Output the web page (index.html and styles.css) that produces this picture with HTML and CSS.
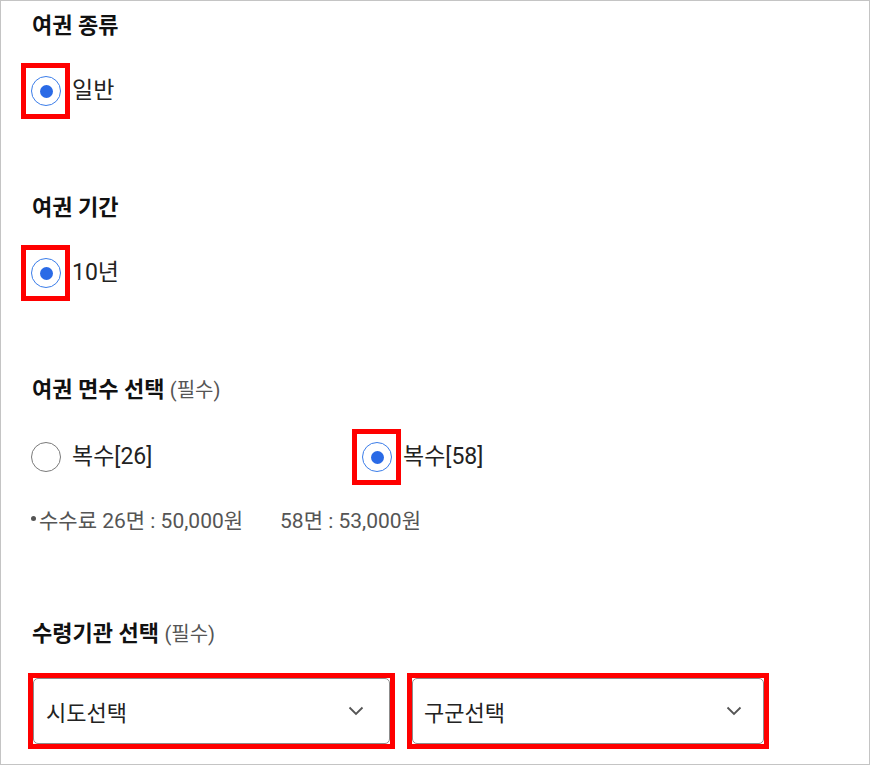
FILE: index.html
```html
<!DOCTYPE html>
<html lang="ko">
<head>
<meta charset="utf-8">
<title>여권 신청</title>
<link rel="stylesheet" href="styles.css">
</head>
<body>
<div class="frame">
  <section class="sec sec-first">
    <h2 class="title">여권 종류</h2>
    <div class="options">
      <label class="opt">
        <span class="mark marked"><span class="radio checked"></span></span>
        <span class="label">일반</span>
      </label>
    </div>
  </section>

  <section class="sec">
    <h2 class="title">여권 기간</h2>
    <div class="options">
      <label class="opt">
        <span class="mark marked"><span class="radio checked"></span></span>
        <span class="label">10년</span>
      </label>
    </div>
  </section>

  <section class="sec">
    <h2 class="title">여권 면수 선택 <span class="req">(필수)</span></h2>
    <div class="options options-two">
      <label class="opt">
        <span class="mark"><span class="radio"></span></span>
        <span class="label">복수[26]</span>
      </label>
      <label class="opt">
        <span class="mark marked"><span class="radio checked"></span></span>
        <span class="label">복수[58]</span>
      </label>
    </div>
    <p class="note"><span class="bullet"></span>수수료 26면 : 50,000원<span class="note-gap"></span>58면 : 53,000원</p>
  </section>

  <section class="sec sec-last">
    <h2 class="title">수령기관 선택 <span class="req">(필수)</span></h2>
    <div class="selects">
      <div class="select-mark">
        <div class="select">
          <span class="select-text">시도선택</span>
          <svg class="chev" width="16" height="10" viewBox="0 0 16 10"><path d="M1.5 1.5 L8 8 L14.5 1.5" fill="none" stroke="#555" stroke-width="1.8"/></svg>
        </div>
      </div>
      <div class="select-mark">
        <div class="select select-b">
          <span class="select-text">구군선택</span>
          <svg class="chev" width="16" height="10" viewBox="0 0 16 10"><path d="M1.5 1.5 L8 8 L14.5 1.5" fill="none" stroke="#555" stroke-width="1.8"/></svg>
        </div>
      </div>
    </div>
  </section>
</div>
</body>
</html>
```

FILE: styles.css
```css
* { box-sizing: border-box; }
html, body { margin: 0; padding: 0; background: #fff; }
body {
  font-family: Roboto, "Noto Sans CJK KR", sans-serif;
  color: #222;
}
.frame {
  width: 870px;
  height: 765px;
  border: 1px solid #c4c4c4;
  overflow: hidden;
  padding: 10px 0 0 20px;
}
.sec { margin-top: 74px; }
.sec-first { margin-top: 0; }
.sec-last { margin-top: 83px; }
.title {
  margin: 0 0 0 11px;
  font-size: 22px;
  font-weight: 700;
  line-height: 30px;
  color: #111;
}
.req {
  font-size: 20px;
  font-weight: 400;
  color: #555;
}
.options {
  display: flex;
  margin-top: 22px;
}
.options-two { margin-top: 24px; }
.opt {
  display: flex;
  align-items: center;
  width: 331px;
}
.mark {
  display: flex;
  align-items: center;
  justify-content: center;
  width: 49px;
  height: 56px;
  border: 5px solid transparent;
  padding-left: 1px;
}
.marked { border-color: #ff0000; }
.radio {
  width: 30px;
  height: 30px;
  border-radius: 50%;
  border: 1px solid #7a7a7a;
  display: flex;
  align-items: center;
  justify-content: center;
}
.radio.checked { border: 1.5px solid #3b7de9; }
.radio.checked::after {
  content: "";
  width: 13px;
  height: 13px;
  border-radius: 50%;
  background: #2a6ae6;
}
.label {
  font-size: 23px;
  line-height: 30px;
  color: #222;
  margin-left: 2px;
}
.note {
  margin: 21px 0 0 10px;
  font-size: 21px;
  line-height: 30px;
  color: #555;
}
.bullet {
  display: inline-block;
  width: 5px;
  height: 5px;
  border-radius: 50%;
  background: #555;
  margin-right: 3px;
  vertical-align: 7px;
}
.note-gap { display: inline-block; width: 37px; }
.selects {
  display: flex;
  gap: 12px;
  margin: 24px 0 0 7px;
}
.select-mark {
  border: 5px solid #ff0000;
}
.select {
  width: 357px;
  height: 66px;
  border: 1px solid #8c8c8c;
  border-radius: 5px;
  display: flex;
  align-items: center;
  justify-content: space-between;
  padding: 0 25px 0 12px;
  background: #fff;
}
.select-b { width: 352px; padding: 0 21px 0 11px; }
.select-text { font-size: 22px; color: #222; }
.chev { display: block; }
```
